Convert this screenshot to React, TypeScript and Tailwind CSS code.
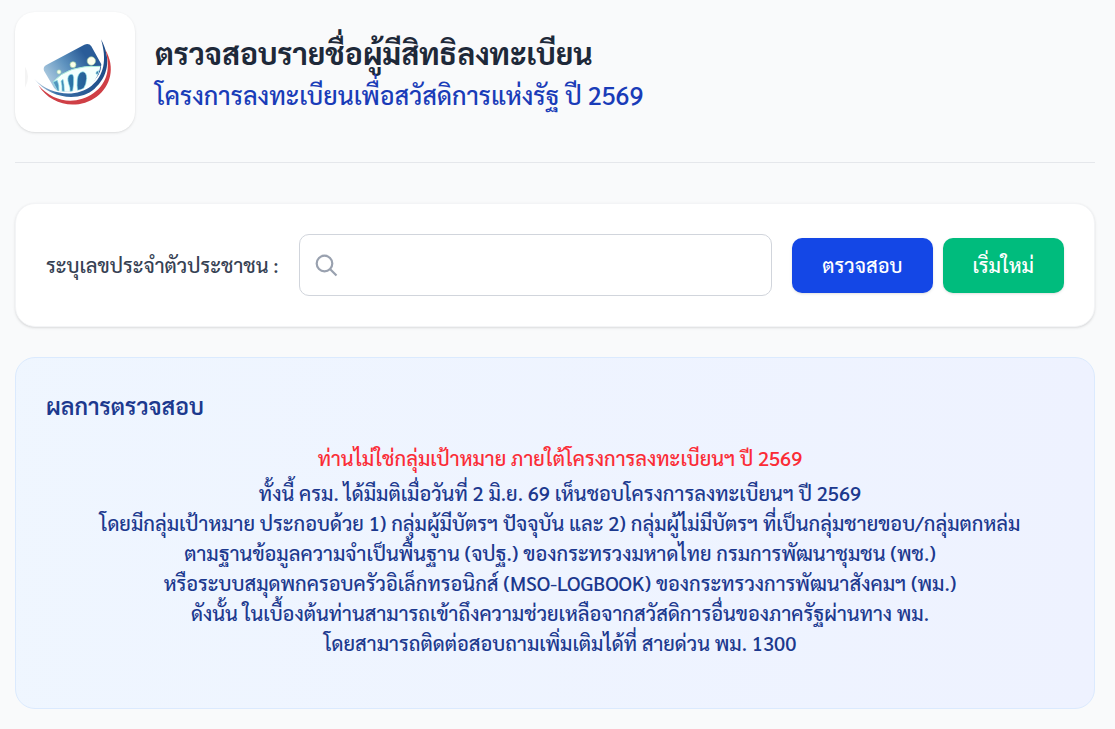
import { useState } from 'react';

const resultLines = [
  'ทั้งนี้ ครม. ได้มีมติเมื่อวันที่ 2 มิ.ย. 69 เห็นชอบโครงการลงทะเบียนฯ ปี 2569',
  'โดยมีกลุ่มเป้าหมาย ประกอบด้วย 1) กลุ่มผู้มีบัตรฯ ปัจจุบัน และ 2) กลุ่มผู้ไม่มีบัตรฯ ที่เป็นกลุ่มชายขอบ/กลุ่มตกหล่ม',
  'ตามฐานข้อมูลความจำเป็นพื้นฐาน (จปฐ.) ของกระทรวงมหาดไทย กรมการพัฒนาชุมชน (พช.)',
  'หรือระบบสมุดพกครอบครัวอิเล็กทรอนิกส์ (MSO-LOGBOOK) ของกระทรวงการพัฒนาสังคมฯ (พม.)',
  'ดังนั้น ในเบื้องต้นท่านสามารถเข้าถึงความช่วยเหลือจากสวัสดิการอื่นของภาครัฐผ่านทาง พม.',
  'โดยสามารถติดต่อสอบถามเพิ่มเติมได้ที่ สายด่วน พม. 1300',
];

function Logo() {
  return (
    <svg viewBox="0 -9 300 300" className="size-[100px]" aria-hidden="true">
      <defs>
        <linearGradient id="card" gradientUnits="userSpaceOnUse" x1="60" y1="150" x2="170" y2="75">
          <stop offset="0" stopColor="#a9c8de" />
          <stop offset="0.5" stopColor="#5f93bf" />
          <stop offset="1" stopColor="#2a5c98" />
        </linearGradient>
        <linearGradient id="slit" gradientUnits="userSpaceOnUse" x1="80" y1="0" x2="190" y2="0">
          <stop offset="0" stopColor="#5f9fc4" />
          <stop offset="0.5" stopColor="#2b76a8" />
          <stop offset="1" stopColor="#245a94" />
        </linearGradient>
        <linearGradient id="blueArc" gradientUnits="userSpaceOnUse" x1="28" y1="0" x2="250" y2="0">
          <stop offset="0" stopColor="#c5d8e8" />
          <stop offset="0.3" stopColor="#3a71a9" />
          <stop offset="1" stopColor="#1d4a86" />
        </linearGradient>
      </defs>
      <path d="M0 125 Q9 138 9 155 Q9 172 0 188 Z" fill="#f4f4f4" />
      {/* card */}
      <path
        d="M64 120 L178 59 Q192 53 199 64 L229 118 Q228 160 190 184 Q140 207 96 197 Q86 190 80 176 L57 137 Q53 126 64 120 Z"
        fill="url(#card)"
      />
      {/* people standing under one arch */}
      <path
        d="M84 171 Q128 119 226 124 C223 150 205 179 180 192 Q140 205 98 198 Z"
        fill="#f4fffd"
      />
      <path d="M84 171 Q128 119 226 124" fill="none" stroke="#a8ead8" strokeWidth="3" />
      <g fill="url(#slit)" stroke="#8fe3e8" strokeWidth="2">
        <path d="M84 171 L97 166 Q103 180 102 198 L98 198 Z" />
        <path d="M111 198 Q112 182 108 168 L114 163 Q118 178 118 199 Z" />
        <path d="M135 199 Q136 187 131 176 Q125 158 133 150 Q144 143 146 158 Q147 178 143 198 Z" />
        <path d="M158 196 Q155 184 157 162 Q160 141 174 140 Q185 142 185 160 Q184 178 176 190 Q168 195 158 196 Z" />
        <path d="M213 147 Q211 139 221 137 L218 148 Z" />
      </g>
      <circle cx="102" cy="141" r="6.5" fill="#fbffe6" stroke="#8cc9b0" strokeWidth="2" />
      <circle cx="144" cy="119" r="9" fill="#fdffe9" stroke="#9bcfa2" strokeWidth="2" />
      <circle cx="199" cy="108" r="12.5" fill="#feffef" stroke="#a5cfa2" strokeWidth="2" />
      {/* swooshes */}
      <path
        d="M226 43 C256 104 246 152 206 189 C163 228 77 221 28 161 C82 215 154 217 197 182 C241 145 246 104 226 43 Z"
        fill="#ffffff"
        stroke="#ffffff"
        strokeWidth="7"
      />
      <path
        d="M228 43 C261 104 248 156 208 192 C165 230 77 224 28 162 C78 213 154 218 199 183 C238 151 246 104 228 43 Z"
        fill="url(#blueArc)"
      />
      <path
        d="M241 74 C272 127 257 184 215 215 C159 256 78 243 40 181 C89 236 156 239 205 205 C249 173 257 127 241 74 Z"
        fill="#cf3f46"
      />
    </svg>
  );
}

export default function App() {
  const [citizenId, setCitizenId] = useState('');

  return (
    <div className="min-h-screen bg-gray-50 pt-3 pr-5 pb-5 pl-[15px] font-['Sarabun','Noto_Sans',sans-serif] text-xl leading-[30px]">
      <header className="flex items-start gap-5 border-b border-gray-200 pb-[30px]">
        <div className="flex size-[120px] shrink-0 items-center justify-center rounded-[20px] bg-white shadow-sm">
          <Logo />
        </div>
        <div className="pt-[21px]">
          <h1 className="text-3xl leading-[40px] font-bold text-gray-800">
            ตรวจสอบรายชื่อผู้มีสิทธิลงทะเบียน
          </h1>
          <p className="text-[25px] leading-[44px] font-medium text-blue-800">
            โครงการลงทะเบียนเพื่อสวัสดิการแห่งรัฐ ปี 2569
          </p>
        </div>
      </header>

      <main className="mt-10 space-y-[30px]">
        <form
          className="flex items-center gap-5 rounded-[20px] border border-gray-100 bg-white p-[30px] shadow-sm"
          onSubmit={(e) => e.preventDefault()}
        >
          <label htmlFor="citizen-id" className="shrink-0 font-medium text-gray-700">
            ระบุเลขประจำตัวประชาชน :
          </label>
          <div className="relative min-w-0 flex-1">
            <svg
              viewBox="0 0 24 24"
              className="pointer-events-none absolute top-1/2 left-4 size-6 -translate-y-1/2 text-gray-400"
              fill="none"
              stroke="currentColor"
              strokeWidth="2.2"
              aria-hidden="true"
            >
              <circle cx="9.5" cy="10.5" r="7.8" />
              <path d="M15 16 L21.5 22.5" />
            </svg>
            <input
              id="citizen-id"
              type="text"
              value={citizenId}
              onChange={(e) => setCitizenId(e.target.value)}
              className="block h-[62px] w-full rounded-[10px] border border-gray-300 bg-white pr-4 pl-[50px] outline-none focus:border-blue-500"
            />
          </div>
          <div className="flex shrink-0 gap-[10px]">
            <button
              type="submit"
              className="h-[55px] rounded-[10px] bg-[#1447e6] px-[30px] font-medium text-white shadow-sm"
            >
              ตรวจสอบ
            </button>
            <button
              type="button"
              onClick={() => setCitizenId('')}
              className="h-[55px] rounded-[10px] bg-[#00bc7d] px-[30px] font-medium text-white shadow-sm"
            >
              เริ่มใหม่
            </button>
          </div>
        </form>

        <section className="rounded-[20px] border border-blue-100 bg-linear-to-r from-blue-50 to-indigo-50 px-[30px] pt-8 pb-[50px] text-blue-900">
          <h2 className="text-[23px] font-semibold">ผลการตรวจสอบ</h2>
          <div className="mt-[23px] pl-[10px] text-center font-medium">
            <p className="mb-[5px] text-[#fb2c36]">
              ท่านไม่ใช่กลุ่มเป้าหมาย ภายใต้โครงการลงทะเบียนฯ ปี 2569
            </p>
            {resultLines.map((line) => (
              <p key={line}>{line}</p>
            ))}
          </div>
        </section>
      </main>
    </div>
  );
}
